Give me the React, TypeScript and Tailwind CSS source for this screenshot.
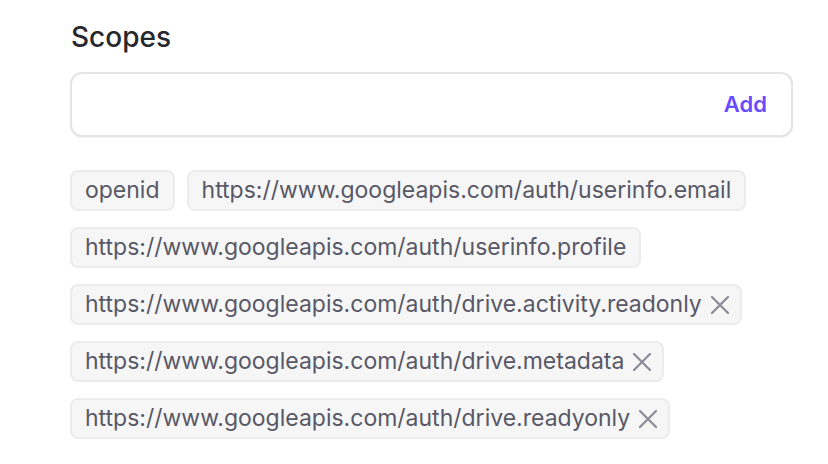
const SCOPES = [
  { label: "openid", removable: false },
  { label: "https://www.googleapis.com/auth/userinfo.email", removable: false },
  { label: "https://www.googleapis.com/auth/userinfo.profile", removable: false },
  { label: "https://www.googleapis.com/auth/drive.activity.readonly", removable: true },
  { label: "https://www.googleapis.com/auth/drive.metadata", removable: true },
  { label: "https://www.googleapis.com/auth/drive.readyonly", removable: true },
];

function CloseIcon() {
  return (
    <svg width="20" height="20" viewBox="0 0 20 20" className="shrink-0">
      <path d="M2 2 L18 18 M18 2 L2 18" stroke="#8b8b96" strokeWidth="2.2" strokeLinecap="round" />
    </svg>
  );
}

export default function App() {
  return (
    <div className="min-h-[464px] w-[828px] bg-white font-['Inter',sans-serif]">
      <div className="w-[723px] ml-[70px] pt-[18px]">
        {/* Title */}
        <h2 className="ml-[1px] text-[28px] leading-[38px] font-medium text-[#27272e]">
          Scopes
        </h2>

        {/* Input */}
        <div className="mt-[16px] flex h-[65px] items-center rounded-[12px] border-2 border-[#e4e4e7] bg-white pr-[24px] shadow-[0_1px_2px_rgba(0,0,0,0.06)]">
          <input className="flex-1 bg-transparent px-4 text-[20px] outline-none" />
          <button className="text-[22px] font-semibold text-[#6a4cff]">Add</button>
        </div>

        {/* Chips */}
        <div className="mt-[33px] flex flex-wrap gap-x-[12px] gap-y-[16px]">
          {SCOPES.map((s) => (
            <span
              key={s.label}
              className={`flex h-[41px] items-center gap-[8px] rounded-[8px] border-2 border-[#ececee] bg-[#f6f6f7] pl-[13px] text-[23px] text-[#585866] ${
                s.removable ? "pr-[10px]" : "pr-[13px]"
              }`}
            >
              {s.label}
              {s.removable && <CloseIcon />}
            </span>
          ))}
        </div>
      </div>
    </div>
  );
}
